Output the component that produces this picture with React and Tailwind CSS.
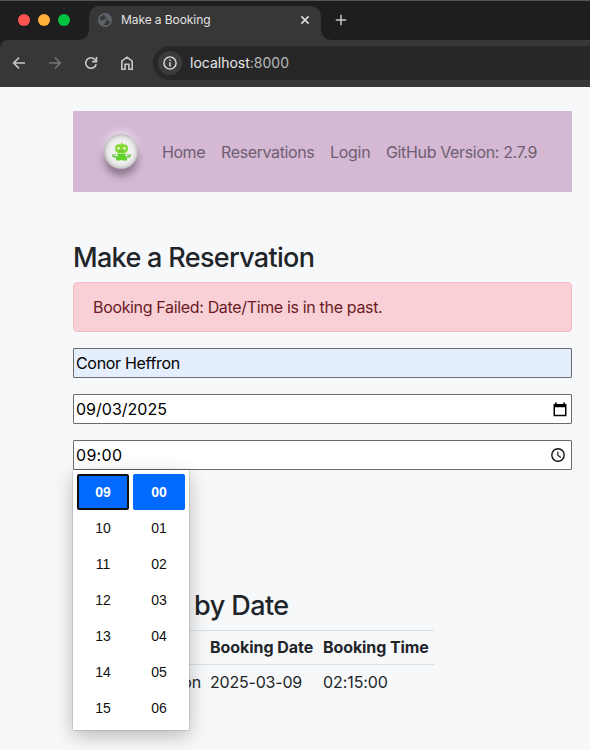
import React from "react";

const hours = ["09", "10", "11", "12", "13", "14", "15"];
const minutes = ["00", "01", "02", "03", "04", "05", "06"];

function BrowserChrome() {
  return (
    <header className="h-[87px] bg-[#1e1e1e] border-t border-[#555756]">
      <div className="flex h-[39px] items-start">
        <div className="flex gap-2 pl-[18px] pt-[13px]">
          <span className="h-3 w-3 rounded-full bg-[#ff5550]" />
          <span className="h-3 w-3 rounded-full bg-[#ffb236]" />
          <span className="h-3 w-3 rounded-full bg-[#00c440]" />
        </div>
        <svg className="ml-[7px] mt-[27px] h-3 w-3 shrink-0" viewBox="0 0 12 12">
          <path d="M12 0v12H0C8 12 12 8 12 0Z" fill="#373737" />
        </svg>
        <div className="mt-[5px] flex h-[34px] w-[232px] items-center rounded-t-[10px] bg-[#373737] pb-[6px] pl-[9px] pr-[11px]">
          <svg className="h-[14px] w-[14px]" viewBox="0 0 14 14">
            <circle cx="7" cy="7" r="7" fill="#5c636b" />
            <path d="M7.2 1.8c-1 .5-1.1 1.3-.4 1.9.8.5 1.6.3 1.5 1.3-.1.8-1 1-1.8 1.1-.8.1-.4 1-1.2 1.2L1.7 7.2C1.8 4.100 4 1.900 7.200 1.800ZM8 6.600c1.500-.2 2 .6 2.500 1.400.5.500 1.300.3 1.700.2-.4 2.300-2.300 4.100-4.700 4.100-1 0-2-.3-2.800-.8 1.300.1 2.200-.3 2.200-1.200 0-1 1.100-.7 1.300-1.400.2-.8-.7-1.200-.2-2.300Z" fill="#373737" />
          </svg>
          <span className="ml-[9px] whitespace-nowrap text-[12px] leading-4 tracking-[-0.080px] text-[#e3e3e3]">Make a Booking</span>
          <svg className="ml-auto h-[10px] w-[10px]" viewBox="0 0 10 10" stroke="#e0e0e0" strokeWidth="1.5">
            <path d="M1.400 1.400l7.200 7.200M8.600 1.400L1.400 8.600" />
          </svg>
        </div>
        <svg className="mt-[27px] h-3 w-3 shrink-0" viewBox="0 0 12 12">
          <path d="M0 0v12h12C4 12 0 8 0 0Z" fill="#373737" />
        </svg>
        <svg className="ml-[2px] mt-[13px] h-3 w-3" viewBox="0 0 12 12" stroke="#c7c7c7" strokeWidth="1.500">
          <path d="M6 .8v10.400M.8 6h10.400" />
        </svg>
      </div>
      <div className="flex h-[47px] items-center rounded-tl-[8px] bg-[#373737] pb-px pl-[11px]">
        <svg className="h-4 w-4" viewBox="0 0 16 16" fill="none" stroke="#c7c7c7" strokeWidth="1.500">
          <path d="M14 8H2.800M8 2.600L2.600 8 8 13.400" />
        </svg>
        <svg className="ml-5 h-4 w-4" viewBox="0 0 16 16" fill="none" stroke="#747474" strokeWidth="1.500">
          <path d="M2 8h11.200M8 2.600L13.400 8 8 13.400" />
        </svg>
        <svg className="ml-5 h-4 w-4" viewBox="0 0 16 16" fill="none" stroke="#c7c7c7" strokeWidth="1.600">
          <path d="M13.200 9.200A5.300 5.300 0 1 1 12.200 4.700L13.500 6.200M13.500 2v4.600H9" />
        </svg>
        <svg className="ml-5 h-4 w-4" viewBox="0 0 16 16" fill="none" stroke="#c7c7c7" strokeWidth="1.600">
          <path d="M2.800 6.200L8 2.200l5.200 4v8.100H9.900V9.200H6.100v5.100H2.800Z" />
        </svg>
        <div className="ml-[18px] flex h-[34px] flex-1 items-center rounded-l-full bg-[#272727] pl-[5px]">
          <span className="flex h-6 w-6 items-center justify-center rounded-full bg-[#3b3b3b]">
            <svg className="h-[14px] w-[14px]" viewBox="0 0 14 14" fill="none" stroke="#dcdcdc" strokeWidth="1.400">
              <circle cx="7" cy="7" r="6.100" />
              <path d="M7 6.200v4.200M7 3.600v1.500" strokeWidth="1.500" />
            </svg>
          </span>
          <span className="ml-2 text-[14px] leading-5 text-[#e8e8e8]">
            localhost<span className="text-[#b9b9b9]">:8000</span>
          </span>
        </div>
      </div>
    </header>
  );
}

function RobotLogo() {
  return (
    <div className="flex h-[35px] w-[34px] items-center justify-center rounded-full border border-[#bdb9bc] bg-[#f0f0f0] shadow-[0_7px_7px_rgba(80,60,80,0.5),0_-3px_8px_rgba(255,255,255,0.5),inset_0_0_5px_#aaaaaa]">
      <svg className="h-[20px] w-[19px] shrink-0" viewBox="0 0 19 20">
        <path d="M9 .5h1.200v1.700h3q2.800 1 2.800 4.300t-2.800 4.500H5.800Q3 9.800 3 6.500t2.800-4.300H9Z" fill="#83da32" />
        <path d="M5.500 11.500h8v4.500H15v2.500h-4.500L9.500 17.500l-1 1H4V16h1.500Z" fill="#5fd32c" />
        <path d="M1 12.500v1.300l1.500 1.200H6M18 12.500v1.300L16.500 15H13M2.500 12.500h1.200M16.500 12.500h-1.200" fill="none" stroke="#5cc634" strokeWidth="1.700" />
        <circle cx="6.600" cy="6.300" r="1.200" fill="#efffe0" />
        <circle cx="12.400" cy="6.300" r="1.200" fill="#efffe0" />
        <path d="M7 8.500q2.500 1.500 5 0" fill="none" stroke="#5a9f35" strokeWidth=".8" />
      </svg>
    </div>
  );
}

function Nav() {
  return (
    <nav className="flex h-[81px] items-center bg-[#d4b8d4] pl-[31px] text-[16px] text-[#6e5f70]">
      <RobotLogo />
      <div className="ml-6 mt-px flex gap-4 whitespace-nowrap">
        <a className="w-[43px] tracking-[-0.450px]">Home</a>
        <a className="w-[93px] tracking-[-0.380px]">Reservations</a>
        <a className="w-[40px] tracking-[-0.300px]">Login</a>
        <a className="tracking-[-0.350px]">GitHub Version: 2.7.9</a>
      </div>
    </nav>
  );
}

function Field({ value, className, children }) {
  return (
    <div className={`flex h-[30px] items-center justify-between rounded-[1px] border border-[#6b6b6b] pl-[2px] text-[16px] leading-6 text-black ${className}`}>
      <span>{value}</span>
      {children}
    </div>
  );
}

function TimeColumn({ values, focused }) {
  return (
    <div className="flex w-[52px] flex-col">
      {values.map((v, i) => (
        <div
          key={v}
          className={`flex h-9 items-center justify-center rounded-[2px] text-[14px] ${
            i === 0 ? "bg-[#006aff] font-bold text-white" : "text-[#101010]"
          } ${i === 0 && focused ? "border-2 border-[#101010]" : ""}`}
        >
          {v}
        </div>
      ))}
    </div>
  );
}

export default function App() {
  return (
    <div className="h-[750px] w-[590px] overflow-hidden bg-[#f7f8fa] font-['Inter','Liberation_Sans',sans-serif] text-[#212529]">
      <BrowserChrome />
      <main className="pl-[73px] pr-[18px] pt-6">
        <Nav />
        <h2 className="mt-12 h-[34px] whitespace-nowrap pt-px text-[27px] font-medium leading-[34px] tracking-[-0.680px]">Make a Reservation</h2>
        <div className="mt-2 flex h-[50px] items-center rounded-[4px] border border-[#f3bcc4] bg-[#f8d0d5] pl-[19px] text-[16px] tracking-[-0.340px] text-[#6b1b24]">
          Booking Failed: Date/Time is in the past.
        </div>
        <div className="mt-4 flex flex-col gap-4">
          <Field value="Conor Heffron" className="bg-[#e5eefd] tracking-[-0.320px]" />
          <Field value="09/03/2025" className="bg-white tracking-[0px]">
            <svg className="mr-[4px] h-[15px] w-[14px]" viewBox="0 0 14 15">
              <path d="M2 .5h1.700V2h6.600V.5H12V2h1.500v12.300H.5V2H2ZM2 5.300v7.500h10V5.300Z" fill="#000" fillRule="evenodd" />
            </svg>
          </Field>
          <div className="relative">
            <Field value="09:00" className="bg-white tracking-[0.300px]">
              <svg className="mr-[6px] h-[14px] w-[14px]" viewBox="0 0 14 14" fill="none" stroke="#111" strokeWidth="1.400">
                <circle cx="7" cy="7" r="6.200" />
                <path d="M6.800 3.400V7.200l3 2.300" strokeWidth="1.100" />
              </svg>
            </Field>
            <div className="absolute left-0 top-[30px] z-10 flex h-[260px] w-[116px] gap-1 bg-white px-1 pt-1 font-['Liberation_Sans',sans-serif] shadow-[0_0_1px_rgba(0,0,0,0.6),0_6px_18px_rgba(0,0,0,0.25)]">
              <TimeColumn values={hours} focused />
              <TimeColumn values={minutes} />
            </div>
          </div>
        </div>
        <h2 className="mt-[118px] h-[34px] whitespace-nowrap pl-[121px] pt-px text-[27px] font-medium leading-[34px] tracking-[-0.550px]">by Date</h2>
        <div className="mt-2 w-[361px] whitespace-nowrap text-[16px]">
          <div className="flex h-[35px] items-center border-y border-[#dadee2] pb-px pl-[137px] font-bold">
            <span className="w-[113px] tracking-[-0.050px]">Booking Date</span>
            <span className="tracking-[-0.100px]">Booking Time</span>
          </div>
          <div className="flex h-[34px] items-center">
            <span className="w-[137px] pr-[9px] text-right tracking-[-0.200px]">on</span>
            <span className="w-[113px] tracking-[-0.200px]">2025-03-09</span>
            <span className="tracking-[-0.080px]">02:15:00</span>
          </div>
        </div>
      </main>
    </div>
  );
}
